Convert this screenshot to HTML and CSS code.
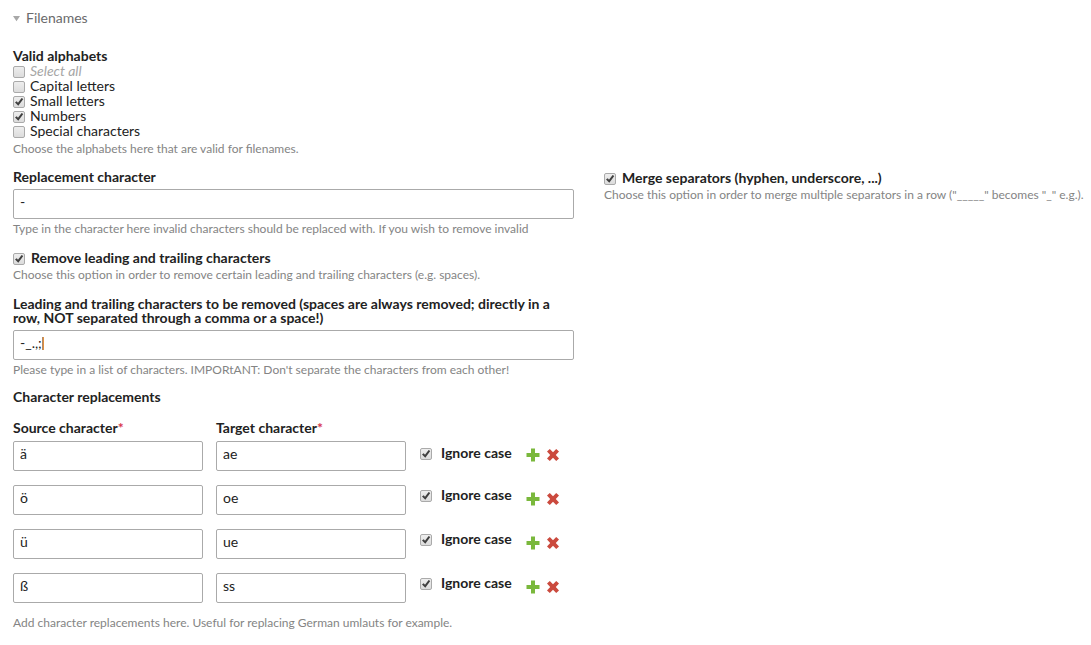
FILE: index.html
```html
<!DOCTYPE html>
<html lang="en">
<head>
<meta charset="utf-8">
<title>Filenames</title>
<link rel="stylesheet" href="styles.css">
</head>
<body>
<svg class="sprite" aria-hidden="true">
  <symbol id="plus" viewBox="0 0 14 14"><path fill="#7ab83c" d="M5 0.500h4v4.500h4.500v4h-4.500v4.500h-4v-4.500h-4.500v-4h4.500z"/></symbol>
  <symbol id="cross" viewBox="0 0 14 14"><path fill="#cb4a3e" d="M3.800 1 7 4.200 10.200 1 13 3.600 9.800 7 13 10.400 10.200 13 7 9.800 3.800 13 1 10.400 4.200 7 1 3.600z"/></symbol>
</svg>
<form class="form">
  <h1 class="legend"><svg class="arrow" viewBox="0 0 8 7" aria-hidden="true"><path fill="#a8a8a8" d="M0 0.500h8L4 6.500z"/></svg>Filenames</h1>

  <fieldset class="alphabets">
    <legend class="label">Valid alphabets</legend>
    <label class="option option-all"><input class="check" type="checkbox">Select all</label>
    <label class="option"><input class="check" type="checkbox">Capital letters</label>
    <label class="option"><input class="check" type="checkbox" checked>Small letters</label>
    <label class="option"><input class="check" type="checkbox" checked>Numbers</label>
    <label class="option"><input class="check" type="checkbox">Special characters</label>
    <p class="help">Choose the alphabets here that are valid for filenames.</p>
  </fieldset>

  <div class="columns">
    <div class="column">
      <div class="field">
        <label class="label" for="replacement">Replacement character</label>
        <input class="text" id="replacement" type="text" value="-">
        <p class="help">Type in the character here invalid characters should be replaced with. If you wish to remove invalid</p>
      </div>
      <div class="field">
        <label class="toggle"><input class="check" type="checkbox" checked>Remove leading and trailing characters</label>
        <p class="help">Choose this option in order to remove certain leading and trailing characters (e.g. spaces).</p>
      </div>
      <div class="field">
        <label class="label" for="trim">Leading and trailing characters to be removed (spaces are always removed; directly in a row, NOT separated through a comma or a space!)</label>
        <div class="editing"><input class="text" id="trim" type="text" value="-_.,;"><span class="caret"></span></div>
        <p class="help">Please type in a list of characters. IMPORtANT: Don't separate the characters from each other!</p>
      </div>
    </div>
    <div class="column merge">
      <label class="toggle"><input class="check" type="checkbox" checked>Merge separators (hyphen, underscore, ...)</label>
      <p class="help">Choose this option in order to merge multiple separators in a row ("_____" becomes "_" e.g.).</p>
    </div>
  </div>

  <h2 class="label">Character replacements</h2>
  <table class="replacements">
    <thead>
      <tr><th id="source">Source character<span class="required">*</span></th><th id="target">Target character<span class="required">*</span></th><td></td><td></td></tr>
    </thead>
    <tbody>
      <tr>
        <td><input class="text" type="text" aria-labelledby="source" value="ä"></td>
        <td><input class="text" type="text" aria-labelledby="target" value="ae"></td>
        <td><label class="toggle ignore"><input class="check" type="checkbox" checked>Ignore case</label></td>
        <td><div class="actions"><button class="icon" type="button" aria-label="Add row"><svg><use href="#plus"/></svg></button><button class="icon" type="button" aria-label="Delete row"><svg><use href="#cross"/></svg></button></div></td>
      </tr>
      <tr>
        <td><input class="text" type="text" aria-labelledby="source" value="ö"></td>
        <td><input class="text" type="text" aria-labelledby="target" value="oe"></td>
        <td><label class="toggle ignore"><input class="check" type="checkbox" checked>Ignore case</label></td>
        <td><div class="actions"><button class="icon" type="button" aria-label="Add row"><svg><use href="#plus"/></svg></button><button class="icon" type="button" aria-label="Delete row"><svg><use href="#cross"/></svg></button></div></td>
      </tr>
      <tr>
        <td><input class="text" type="text" aria-labelledby="source" value="ü"></td>
        <td><input class="text" type="text" aria-labelledby="target" value="ue"></td>
        <td><label class="toggle ignore"><input class="check" type="checkbox" checked>Ignore case</label></td>
        <td><div class="actions"><button class="icon" type="button" aria-label="Add row"><svg><use href="#plus"/></svg></button><button class="icon" type="button" aria-label="Delete row"><svg><use href="#cross"/></svg></button></div></td>
      </tr>
      <tr>
        <td><input class="text" type="text" aria-labelledby="source" value="ß"></td>
        <td><input class="text" type="text" aria-labelledby="target" value="ss"></td>
        <td><label class="toggle ignore"><input class="check" type="checkbox" checked>Ignore case</label></td>
        <td><div class="actions"><button class="icon" type="button" aria-label="Add row"><svg><use href="#plus"/></svg></button><button class="icon" type="button" aria-label="Delete row"><svg><use href="#cross"/></svg></button></div></td>
      </tr>
    </tbody>
  </table>
  <p class="help">Add character replacements here. Useful for replacing German umlauts for example.</p>
</form>
</body>
</html>
```

FILE: styles.css
```css
* { box-sizing: border-box; }

body {
  margin: 0;
  background: #fff;
  color: #222;
  font: 14px/14px Lato, sans-serif;
}

.sprite { display: none; }

.form { padding: 10px 6px 12px 13px; }

.legend {
  display: flex;
  align-items: center;
  gap: 6px;
  margin: 0 0 23px;
  color: #6a6a6c;
  font-size: 14px;
  font-weight: 400;
  line-height: 16px;
}

.arrow { width: 7px; height: 7px; }

.alphabets {
  margin: 0;
  padding: 0;
  border: 0;
}

.alphabets .help { padding-top: 4px; }

.label {
  display: block;
  margin: 0;
  padding: 0;
  font-size: 14px;
  font-weight: 700;
  line-height: 14px;
}

.option {
  display: flex;
  align-items: center;
  gap: 5px;
  line-height: 15px;
}

.option-all {
  color: #a6a6a6;
  font-style: italic;
}

.check {
  appearance: none;
  flex: none;
  width: 12px;
  height: 12px;
  margin: 3px 0 0;
  border: 1px solid #aaa;
  border-radius: 2px;
  background: linear-gradient(#eee, #dcdcdc);
}

.check:checked {
  background:
    url("data:image/svg+xml,%3Csvg xmlns='http://www.w3.org/2000/svg' viewBox='0 0 10 10'%3E%3Cpath d='M1 5.500 2.700 4.300 4 5.700 7.600 1 9.300 2 4.300 8.700z' fill='%23404040'/%3E%3C/svg%3E") center / 10px no-repeat,
    linear-gradient(#eee, #dcdcdc);
}

.help {
  margin: 0;
  padding-top: 3px;
  color: #848484;
  font-size: 12px;
  line-height: 14px;
  white-space: nowrap;
}

.columns {
  display: grid;
  grid-template-columns: 7fr 6fr;
  gap: 30px;
  margin: 14px 0 13px;
}

.column {
  display: flex;
  flex-direction: column;
  gap: 14px;
  min-width: 0;
}

.merge { gap: 0; }

.text {
  display: block;
  width: 100%;
  height: 30px;
  padding: 0 6px 6px;
  border: 1px solid #aaa;
  border-radius: 2px;
  background: #fff;
  color: #222;
  font: inherit;
}

.label + .text,
.editing { margin-top: 5px; }

.editing { position: relative; }

.caret {
  position: absolute;
  top: 7px;
  left: 29px;
  width: 2px;
  height: 13px;
  border-left: 1px solid #b08a6a;
  background: #e09040;
}

.toggle {
  display: flex;
  align-items: center;
  gap: 6px;
  font-weight: 700;
  line-height: 15px;
}

.toggle + .help { padding-bottom: 1px; }

.replacements {
  margin-top: 17px;
  border-spacing: 0;
}

.replacements th {
  padding: 0 13px 6px 0;
  text-align: left;
  line-height: 14px;
}

.replacements td {
  padding: 0 14px 14px 0;
  vertical-align: top;
}

.replacements thead td { padding-bottom: 0; }

.replacements tbody tr:last-child td { padding-bottom: 10px; }

.replacements td:nth-child(1) { padding-right: 13px; }

.replacements .text { width: 190px; }

.ignore {
  gap: 9px;
  padding-top: 2px;
}

.replacements tbody tr:first-child .ignore { padding-top: 4px; }

.required { color: #d8344c; }

.actions {
  display: flex;
  gap: 6px;
  padding-top: 7px;
}

.icon {
  width: 14px;
  height: 14px;
  padding: 0;
  border: 0;
  background: none;
}

.icon svg {
  display: block;
  width: 14px;
  height: 14px;
}
```
